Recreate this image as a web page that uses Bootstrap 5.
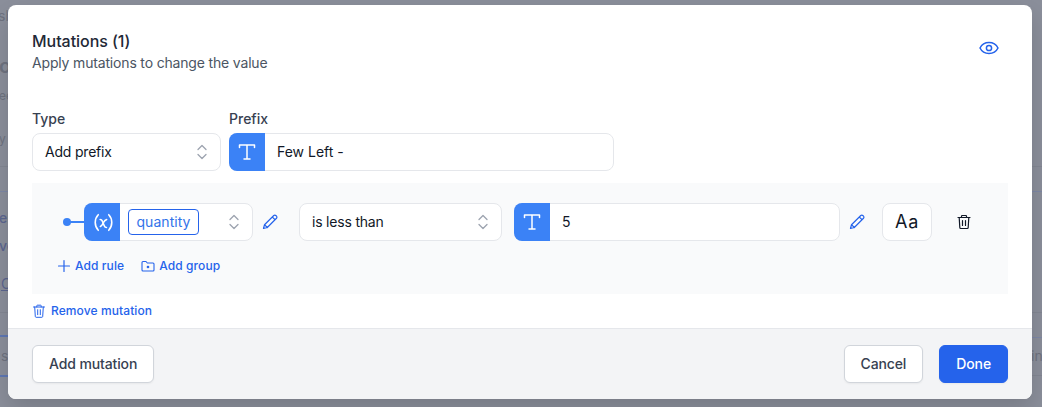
<!DOCTYPE html>
<html lang="en">
<head>
<meta charset="utf-8">
<title>Mutations</title>
<link href="https://cdn.jsdelivr.net/npm/bootstrap@5.3.0/dist/css/bootstrap.min.css" rel="stylesheet">
<style>
html,body{height:100%;overflow:hidden}
body{background:#8b8f9b;font-family:Inter,"Liberation Sans",sans-serif;font-size:14px;color:#111827;position:relative}
.bg-frag{position:absolute;color:#6f7380;font-size:14px;line-height:1;white-space:nowrap}
.bg-blue{color:#5c6690}
.bg-line{position:absolute;background:#838793;height:1px;left:0;width:8px}
.bg-line.r{left:1032px;width:10px}
.bg-line.bl{background:#7e88a6}
.bg-line.th{background:#5f78b4;height:2px}
.dlg{position:absolute;left:8px;top:5px;width:1024px;height:394px;background:#fff;border-radius:8px;box-shadow:0 10px 25px rgba(0,0,0,.15);display:flex;flex-direction:column;overflow:hidden}
.dlg-body{flex:1 1 auto;min-height:0;padding:24px 24px 0}
.dlg-title{font-size:16px;line-height:24px;font-weight:500;color:#1f2937;letter-spacing:-.05px}
.dlg-sub{font-size:14px;line-height:20px;color:#4b5563;letter-spacing:-.17px}
.eye{width:24px;height:24px;color:#2563eb;margin-right:7px;margin-top:7px}
.fields{margin-top:36px;gap:8px}
.lbl{font-size:14px;line-height:20px;font-weight:500;color:#374151;margin-bottom:4px;height:20px}
.box{height:38px;background:#fff;border:1px solid #e5e7eb;border-radius:8px;display:flex;align-items:center;color:#111827;line-height:20px}
.sel{justify-content:space-between;padding:0 10px 0 12px}
.sel span{letter-spacing:-.2px}
.chev{width:16px;height:16px;color:#9ca3af;flex:none}
.ico-t{width:36px;height:38px;margin:-1px 0 -1px -1px;background:#3b82f6;color:#fff;border-radius:8px 0 0 8px;display:flex;align-items:center;justify-content:center;flex:none}
.ico-t svg{width:20px;height:20px}
.ico-t .varx{margin-left:2px;width:19px;height:19px}
.w-type{width:189px}
.w-prefix{width:385px}
.inp-text{padding-left:12px}
.rule-panel{background:#f9fafb;margin-top:12px;height:111px;padding:20px 0 0 31px}
.dot{width:8px;height:8px;border-radius:50%;background:#3b82f6;flex:none}
.dash{width:14px;height:1.5px;background:#3b82f6;flex:none;margin-left:-1px}
.w-var{width:169px}
.chip{border:1px solid #2563eb;border-radius:4px;color:#3273e9;height:26px;width:71px;margin-left:8px;display:flex;align-items:center;justify-content:center;font-size:14px;line-height:20px;letter-spacing:.05px}
.pencil{width:16px;height:16px;color:#2563eb;flex:none}
.w-op{width:203px}
.w-val{width:326px}
.aa{width:50px;font-size:18px;justify-content:center;letter-spacing:.8px;font-weight:400}
.trash-b{width:16px;height:16px;color:#111827;flex:none}
.rule-acts{gap:17px;margin-top:17px;margin-left:-6px}
.lnk{color:#2563eb;font-size:12px;line-height:16px;font-weight:500;display:flex;align-items:center;gap:5px;text-decoration:none;letter-spacing:.1px}
.lnk svg{width:14px;height:14px;flex:none}
.rule-acts .lnk{gap:4px}
.rm{margin-top:9px}
.dlg-foot{height:71px;flex:none;background:#f3f4f6;border-top:1px solid #e5e7eb;padding:16px 24px 0;display:flex;justify-content:space-between;align-items:flex-start}
.fbtn{height:38px;border:1px solid #d1d5db;border-radius:6px;background:#fff;color:#374151;font-weight:500;font-size:14px;line-height:20px;padding:0 16px;box-shadow:0 1px 2px rgba(0,0,0,.05);letter-spacing:-.12px}
.fbtn-p{background:#2563eb;border-color:#2563eb;color:#fff}
.fbtn-p:hover{background:#2563eb;border-color:#2563eb;color:#fff}
</style>
</head>
<body>
<span class="bg-frag" style="left:-2px;top:9px">sh</span>
<span class="bg-frag" style="left:-1px;top:56px;font-size:20px;font-weight:600">o</span>
<span class="bg-frag" style="left:-1px;top:90px;font-size:12px">ee</span>
<span class="bg-frag" style="left:-1px;top:133px;font-size:12px">y</span>
<span class="bg-line" style="top:166px"></span>
<span class="bg-line bl" style="top:191px"></span>
<span class="bg-frag bg-blue" style="left:-1px;top:211px;font-weight:500">el</span>
<span class="bg-frag bg-blue" style="left:-1px;top:239px;font-weight:500">ve</span>
<span class="bg-frag bg-blue" style="left:1px;top:277px;text-decoration:underline">C</span>
<span class="bg-line" style="top:312px"></span>
<span class="bg-line th" style="top:335px"></span>
<span class="bg-frag" style="left:1px;top:349px">s</span>
<span class="bg-line th" style="top:375px"></span>
<span class="bg-line r" style="top:166px"></span>
<span class="bg-line r bl" style="top:191px"></span>
<span class="bg-line r" style="top:312px"></span>
<span class="bg-line r bl" style="top:337px"></span>
<span class="bg-frag" style="left:1031px;top:349px">in</span>
<span class="bg-line r" style="top:375px"></span>

<div class="dlg">
  <div class="dlg-body">
    <div class="d-flex justify-content-between align-items-start">
      <div>
        <div class="dlg-title">Mutations (1)</div>
        <div class="dlg-sub">Apply mutations to change the value</div>
      </div>
      <svg class="eye" viewBox="0 0 24 24" fill="none" stroke="currentColor" stroke-width="1.500"><path d="M3 12c1.800-3.600 5-5.500 9-5.500s7.200 1.900 9 5.500c-1.800 3.600-5 5.500-9 5.500S4.800 15.600 3 12z"/><circle cx="12" cy="12" r="2.600"/></svg>
    </div>
    <div class="d-flex fields">
      <div class="w-type">
        <div class="lbl">Type</div>
        <div class="box sel"><span>Add prefix</span>
          <svg class="chev" viewBox="0 0 16 16" fill="none" stroke="currentColor" stroke-width="1.300" stroke-linecap="round" stroke-linejoin="round"><path d="M4 5.500 8 1.500 12 5.500M4 10.500 8 14.500 12 10.500"/></svg>
        </div>
      </div>
      <div class="w-prefix">
        <div class="lbl">Prefix</div>
        <div class="box">
          <span class="ico-t"><svg viewBox="0 0 20 20" fill="none" stroke="currentColor" stroke-width="1.500" stroke-linecap="round" stroke-linejoin="round"><path d="M2.500 5.500V3h15v2.500M10 3v14M7 17h6"/></svg></span>
          <span class="inp-text">Few Left -</span>
        </div>
      </div>
    </div>
    <div class="rule-panel">
      <div class="d-flex align-items-center">
        <span class="dot"></span><span class="dash"></span>
        <div class="box w-var">
          <span class="ico-t"><svg class="varx" viewBox="0 0 20 20" fill="none" stroke="currentColor" stroke-width="1.400" stroke-linecap="round" stroke-linejoin="round"><path d="M4.500 1.800C2.200 4.200 1.300 7 1.300 10s.9 5.800 3.200 8.200M15.500 1.800c2.300 2.400 3.200 5.200 3.200 8.200s-.9 5.800-3.200 8.200M6.500 6.800c1.200 0 1.800.6 2.300 1.800l2 4.800c.5 1.200 1.100 1.800 2.300 1.800" stroke-width="1.700"/><path d="M13.300 7c-1.600.1-2.800 2-3.300 3s-1.500 3.300-3.300 4.200" stroke-width="1.700"/></svg></span>
          <span class="chip">quantity</span>
          <svg class="chev ms-auto" style="margin-right:10px" viewBox="0 0 16 16" fill="none" stroke="currentColor" stroke-width="1.300" stroke-linecap="round" stroke-linejoin="round"><path d="M4 5.500 8 1.500 12 5.500M4 10.500 8 14.500 12 10.500"/></svg>
        </div>
        <svg class="pencil" style="margin-left:9px" viewBox="0 0 16 16" fill="none" stroke="currentColor" stroke-width="1.200" stroke-linejoin="round" stroke-linecap="round"><path d="M1.500 14.500l1-3.800L11.800 1.500a1.400 1.400 0 0 1 2 0l.7.700a1.400 1.400 0 0 1 0 2L5.300 13.500l-3.800 1zM2.500 10.700l2.800 2.800M10.300 3l2.700 2.700"/></svg>
        <div class="box sel w-op" style="margin-left:21px"><span>is less than</span>
          <svg class="chev" viewBox="0 0 16 16" fill="none" stroke="currentColor" stroke-width="1.300" stroke-linecap="round" stroke-linejoin="round"><path d="M4 5.500 8 1.500 12 5.500M4 10.500 8 14.500 12 10.500"/></svg>
        </div>
        <div class="box w-val" style="margin-left:12px">
          <span class="ico-t"><svg viewBox="0 0 20 20" fill="none" stroke="currentColor" stroke-width="1.500" stroke-linecap="round" stroke-linejoin="round"><path d="M2.500 5.500V3h15v2.500M10 3v14M7 17h6"/></svg></span>
          <span class="inp-text">5</span>
        </div>
        <svg class="pencil" style="margin-left:9px" viewBox="0 0 16 16" fill="none" stroke="currentColor" stroke-width="1.200" stroke-linejoin="round" stroke-linecap="round"><path d="M1.500 14.500l1-3.800L11.800 1.500a1.400 1.400 0 0 1 2 0l.7.700a1.400 1.400 0 0 1 0 2L5.300 13.500l-3.800 1zM2.500 10.700l2.800 2.800M10.300 3l2.700 2.700"/></svg>
        <div class="box aa" style="margin-left:17px">Aa</div>
        <svg class="trash-b" style="margin-left:24px" viewBox="0 0 16 16" fill="none" stroke="currentColor" stroke-width="1.200" stroke-linecap="round" stroke-linejoin="round"><path d="M2 3.500h12M5.500 3.500V2.200c0-.4.300-.7.700-.7h3.600c.4 0 .7.300.7.700v1.300M3.200 3.500l.6 10c0 .6.500 1 1 1h6.400c.5 0 1-.4 1-1l.6-10M6.500 6.500v5M9.500 6.500v5"/></svg>
      </div>
      <div class="d-flex rule-acts">
        <a class="lnk" href="#"><svg viewBox="0 0 14 14" fill="none" stroke="currentColor" stroke-width="1.200" stroke-linecap="round"><path d="M7 1.500v11M1.500 7h11"/></svg>Add rule</a>
        <a class="lnk" href="#"><svg viewBox="0 0 14 14" fill="none" stroke="currentColor" stroke-width="1.100" stroke-linejoin="round"><path d="M1 3.500c0-.6.400-1 1-1h3l1.300 1.500H12c.6 0 1 .4 1 1v6c0 .6-.4 1-1 1H2c-.6 0-1-.4-1-1z"/><circle cx="7" cy="8" r=".8" fill="currentColor"/></svg>Add group</a>
      </div>
    </div>
    <a class="lnk rm" href="#"><svg viewBox="0 0 14 14" fill="none" stroke="currentColor" stroke-width="1" stroke-linecap="round" stroke-linejoin="round"><path d="M1.500 3h11M4.800 3V1.700c0-.3.200-.5.500-.5h3.400c.3 0 .5.200.5.500V3M2.700 3l.6 9.500c0 .5.400.8.800.8h5.800c.4 0 .8-.3.800-.8l.6-9.500M5.700 5.700v5M8.300 5.700v5"/></svg>Remove mutation</a>
  </div>
  <div class="dlg-foot">
    <button type="button" class="btn fbtn">Add mutation</button>
    <div class="d-flex gap-3">
      <button type="button" class="btn fbtn">Cancel</button>
      <button type="button" class="btn fbtn fbtn-p">Done</button>
    </div>
  </div>
</div>
<script src="https://cdn.jsdelivr.net/npm/bootstrap@5.3.0/dist/js/bootstrap.bundle.min.js"></script>
</body>
</html>
